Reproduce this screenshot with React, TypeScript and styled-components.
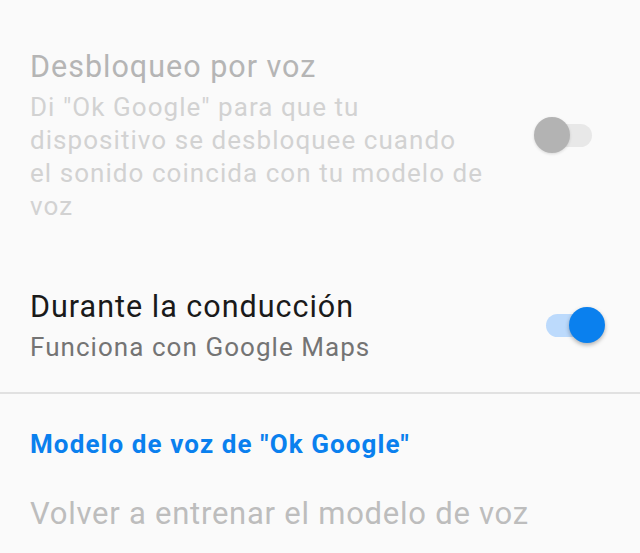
import React from "react";
import styled, { createGlobalStyle } from "styled-components";

const GlobalStyle = createGlobalStyle`
  html, body {
    margin: 0;
    padding: 0;
    background: #fafafa;
  }
  body {
    font-family: Roboto, "Noto Sans", sans-serif;
    -webkit-font-smoothing: antialiased;
  }
`;

const App: React.FC = () => {
  return (
    <>
      <GlobalStyle />
      <Screen>
        <PrefRow $top={47} $bottom={0}>
          <PrefText>
            <PrefTitle $disabled>Desbloqueo por voz</PrefTitle>
            <PrefSummary $disabled>
              Di "Ok Google" para que tu
              <br />
              dispositivo se desbloquee cuando
              <br />
              el sonido coincida con tu modelo de
              <br />
              voz
            </PrefSummary>
          </PrefText>
          <Switch checked={false} disabled />
        </PrefRow>

        <PrefRow $top={64} $bottom={28}>
          <PrefText>
            <PrefTitle>Durante la conducción</PrefTitle>
            <PrefSummary>Funciona con Google Maps</PrefSummary>
          </PrefText>
          <Switch checked />
        </PrefRow>

        <Divider />

        <CategoryTitle>Modelo de voz de "Ok Google"</CategoryTitle>
        <ActionItem>Volver a entrenar el modelo de voz</ActionItem>
      </Screen>
    </>
  );
};

export default App;

type SwitchProps = { checked: boolean; disabled?: boolean };

const Switch: React.FC<SwitchProps> = ({ checked, disabled }) => (
  <SwitchBox>
    <Track $checked={checked} $disabled={disabled} />
    <Thumb $checked={checked} $disabled={disabled} />
  </SwitchBox>
);

const Screen = styled.div`
  width: 640px;
  height: 553px;
  overflow: hidden;
  background: #fafafa;
`;

const PrefRow = styled.div<{ $top: number; $bottom: number }>`
  display: flex;
  align-items: center;
  padding: ${(p) => p.$top}px 35px ${(p) => p.$bottom}px 30px;
`;

const PrefText = styled.div`
  display: flex;
  flex-direction: column;
  min-width: 0;
  flex: 1;
`;

const PrefTitle = styled.div<{ $disabled?: boolean }>`
  font-size: 30.5px;
  line-height: 40px;
  letter-spacing: 1px;
  white-space: nowrap;
  color: ${(p) => (p.$disabled ? "#b5b5b5" : "#1a1a1a")};
`;

const PrefSummary = styled.div<{ $disabled?: boolean }>`
  margin-top: 4px;
  font-size: 26px;
  line-height: 33px;
  letter-spacing: 1.05px;
  white-space: nowrap;
  color: ${(p) => (p.$disabled ? "#d2d2d2" : "#747474")};
`;

const SwitchBox = styled.div`
  position: relative;
  width: 71px;
  height: 37px;
  margin-left: auto;
  flex-shrink: 0;
`;

const Track = styled.div<{ $checked: boolean; $disabled?: boolean }>`
  position: absolute;
  left: 12px;
  top: 7px;
  width: 46px;
  height: 23px;
  border-radius: 12px;
  background: ${(p) =>
    p.$disabled ? "#e8e8e8" : p.$checked ? "#bcdafc" : "#bdbdbd"};
`;

const Thumb = styled.div<{ $checked: boolean; $disabled?: boolean }>`
  position: absolute;
  top: 0;
  left: ${(p) => (p.$checked ? "35px" : "0px")};
  width: 36px;
  height: 36px;
  border-radius: 50%;
  background: ${(p) =>
    p.$disabled ? "#b3b3b3" : p.$checked ? "#0a80ee" : "#f1f1f1"};
  box-shadow: ${(p) =>
    p.$disabled ? "0 1px 3px rgba(0,0,0,0.14)" : "0 2px 4px rgba(0,0,0,0.3)"};
`;

const Divider = styled.div`
  height: 2px;
  background: #e1e1e1;
`;

const CategoryTitle = styled.div`
  padding: 33px 30px 0;
  font-size: 26px;
  line-height: 34px;
  font-weight: 700;
  letter-spacing: 1.1px;
  color: #0a80ee;
`;

const ActionItem = styled.div`
  padding: 34px 30px 0;
  font-size: 31px;
  line-height: 38px;
  letter-spacing: 0.75px;
  color: #bdbdbd;
`;
